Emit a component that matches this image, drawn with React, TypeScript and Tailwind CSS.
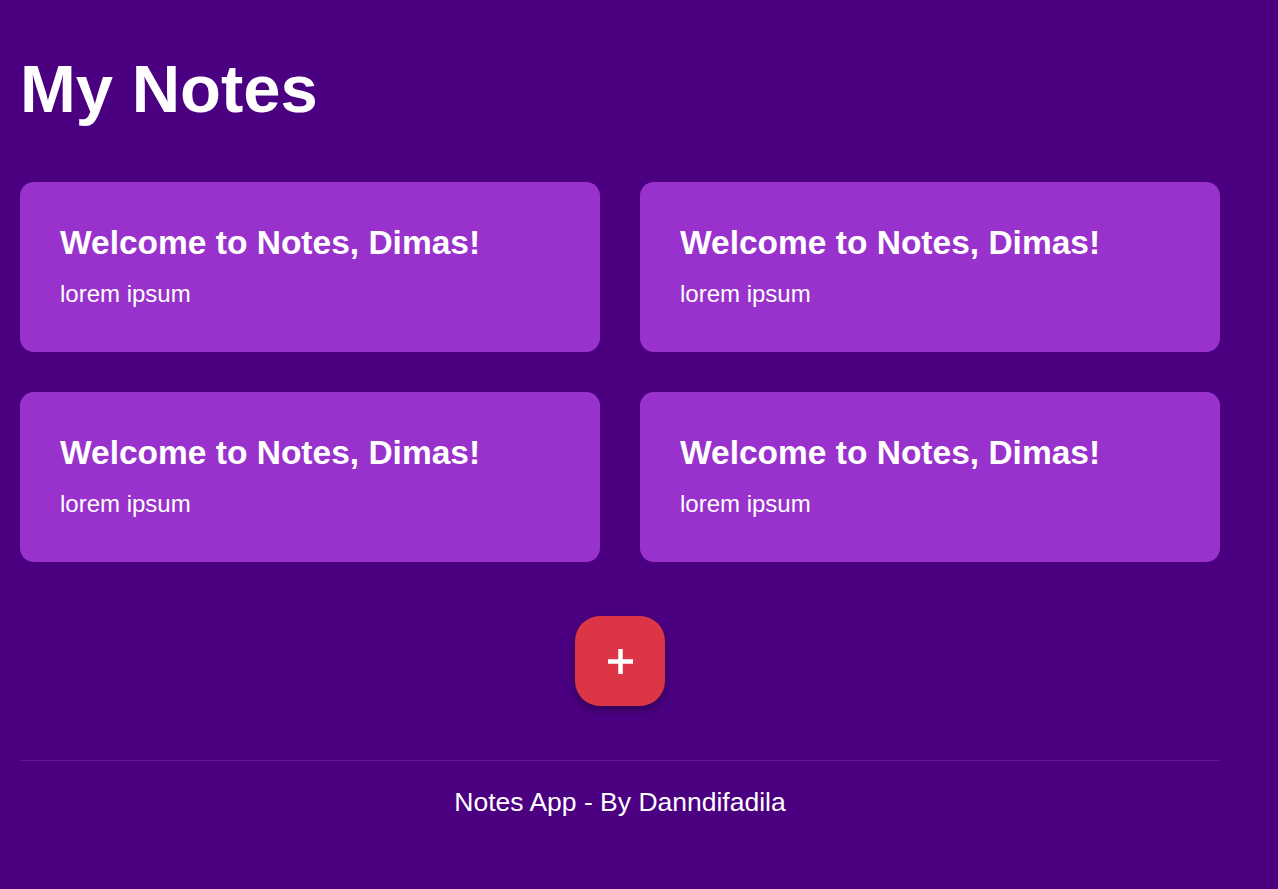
const NOTES = [
  { id: 1, title: 'Welcome to Notes, Dimas!', body: 'lorem ipsum' },
  { id: 2, title: 'Welcome to Notes, Dimas!', body: 'lorem ipsum' },
  { id: 3, title: 'Welcome to Notes, Dimas!', body: 'lorem ipsum' },
  { id: 4, title: 'Welcome to Notes, Dimas!', body: 'lorem ipsum' },
]

export default function App() {
  return (
    <div className="min-h-screen bg-[#4b0082] text-white font-['Liberation_Sans',Arial,sans-serif]">
      <div className="w-[1200px] ml-[20px]">
        {/* Header */}
        <h1 className="pt-[50px] text-[67px] font-bold leading-[77px]">My Notes</h1>

        {/* Notes grid */}
        <div className="mt-[55px] grid grid-cols-2 gap-[40px]">
          {NOTES.map((n) => (
            <div key={n.id} className="h-[170px] rounded-[14px] bg-[#9932cc] px-[40px] pt-[42px]">
              <h2 className="text-[33.5px] font-bold leading-[38px]">{n.title}</h2>
              <p className="mt-[18px] text-[24px] leading-[28px]">{n.body}</p>
            </div>
          ))}
        </div>

        {/* Add button */}
        <div className="mt-[54px] flex justify-center">
          <button className="flex h-[90px] w-[90px] items-center justify-center rounded-[25px] bg-[#dc3545] shadow-[0_4px_10px_rgba(0,0,0,0.35)]">
            <svg width="27" height="27" viewBox="0 0 27 27">
              <path d="M13.5 1v25M1 13.5h25" stroke="white" strokeWidth="4.5" />
            </svg>
          </button>
        </div>

        {/* Footer */}
        <footer className="mt-[54px] border-t border-[#5e1a95] pt-[26px] text-center">
          <p className="text-[26.5px] leading-[30px]">Notes App - By Danndifadila</p>
        </footer>
      </div>
    </div>
  )
}
